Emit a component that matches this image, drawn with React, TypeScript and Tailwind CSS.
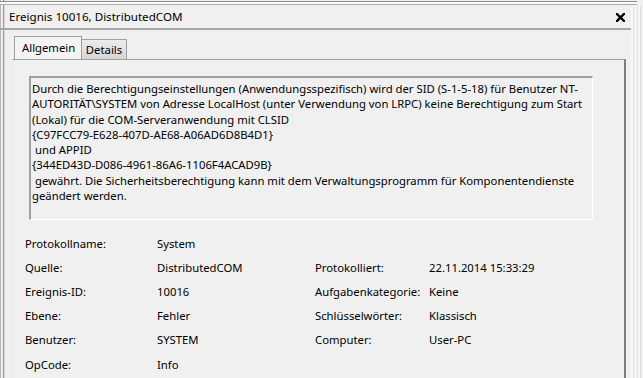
import React from 'react';

const messageLines = [
  'Durch die Berechtigungseinstellungen (Anwendungsspezifisch) wird der SID (S-1-5-18) für Benutzer NT-',
  'AUTORITÄT\\SYSTEM von Adresse LocalHost (unter Verwendung von LRPC) keine Berechtigung zum Start',
  '(Lokal) für die COM-Serveranwendung mit CLSID',
  '{C97FCC79-E628-407D-AE68-A06AD6D8B4D1}',
  ' und APPID',
  '{344ED43D-D086-4961-86A6-1106F4ACAD9B}',
  ' gewährt. Die Sicherheitsberechtigung kann mit dem Verwaltungsprogramm für Komponentendienste',
  'geändert werden.',
];

const rows: [string, string, string?, string?][] = [
  ['Protokollname:', 'System'],
  ['Quelle:', 'DistributedCOM', 'Protokolliert:', '22.11.2014 15:33:29'],
  ['Ereignis-ID:', '10016', 'Aufgabenkategorie:', 'Keine'],
  ['Ebene:', 'Fehler', 'Schlüsselwörter:', 'Klassisch'],
  ['Benutzer:', 'SYSTEM', 'Computer:', 'User-PC'],
  ['OpCode:', 'Info'],
];

function CloseIcon() {
  return (
    <svg width="9" height="9" viewBox="0 0 9 9">
      <path d="M1 1 L8 8 M8 1 L1 8" stroke="#000" strokeWidth="2.4" strokeLinecap="square" />
    </svg>
  );
}

export default function App() {
  return (
    <div
      className="w-[643px] h-[378px] overflow-hidden bg-[#f0f0f0] text-black text-[11.3px] flex"
      style={{ fontFamily: '"Segoe UI", "Noto Sans", sans-serif' }}
    >
      {/* window frame left */}
      <div className="w-[12px] h-full flex shrink-0">
        <div className="w-[1px] bg-[#b5b5b5]" />
        <div className="w-[2px]" />
        <div className="w-[1px] bg-[#9a9a9a]" />
        <div className="w-[1px] bg-[#d8d8d8]" />
      </div>

      <div className="flex-1 flex flex-col -ml-[12px]">
        {/* top frame */}
        <div className="h-[6px] flex flex-col">
          <div className="h-[1px]" />
          <div className="h-[1px] bg-[#8c8c8c]" />
          <div className="h-[2px] bg-[#fafafa]" />
          <div className="h-[1px] bg-[#a8a8a8]" />
        </div>

        {/* title */}
        <div className="h-[22px] flex items-center justify-between pl-[9px] pr-[12px] text-[11.6px]">
          <span className="leading-none">Ereignis 10016, DistributedCOM</span>
          <CloseIcon />
        </div>
        <div className="h-[2px] bg-[#a6a6a6] mr-[4px]" />

        {/* tabs */}
        <div className="flex items-end pl-[14px] mt-[6px] h-[23px]">
          <div className="h-[23px] w-[68px] border border-b-0 border-[#a0a0a0] bg-[#f4f4f4] flex items-center pl-[7px]">
            Allgemein
          </div>
          <div className="h-[20px] w-[45px] border border-l-0 border-b-0 border-[#a0a0a0] bg-gradient-to-b from-[#ececec] to-[#d6d6d6] flex items-center justify-center pt-[2px]">
            Details
          </div>
        </div>

        {/* tab panel */}
        <div className="flex-1 ml-[12px] mr-[11px] border-t border-l border-r-2 border-t-[#a0a0a0] border-l-[#e8e8e8] border-r-[#7d7d7d] pl-[16px] pr-[31px] pt-[16px]">
          <div className="h-[144px] border-t-2 border-l-2 border-b border-r border-t-[#a0a0a0] border-l-[#a0a0a0] border-b-white border-r-white pl-[1px] pt-[3px] leading-[15.3px] whitespace-pre">
            {messageLines.map((line, i) => (
              <div key={i}>{line}</div>
            ))}
          </div>

          <div className="mt-[12px] -ml-[4px]">
            {rows.map(([l1, v1, l2, v2], i) => (
              <div key={i} className="h-[24.2px] flex items-center">
                <div className="w-[132px]">{l1}</div>
                <div className="w-[158px]">{v1}</div>
                <div className="w-[114px]">{l2}</div>
                <div>{v2}</div>
              </div>
            ))}
          </div>
        </div>
      </div>

      {/* right frame */}
      <div className="w-[12px] h-full flex shrink-0 -ml-[6px] pt-[6px]">
        <div className="w-[2px] bg-[#f7f7f7]" />
        <div className="w-[1px] bg-[#e6e6e6]" />
        <div className="w-[3px] bg-[#f3f3f3]" />
        <div className="w-[1px] bg-[#e2e2e2]" />
        <div className="w-[2px] bg-[#f6f6f6]" />
        <div className="w-[1px] bg-[#dcdcdc]" />
      </div>
    </div>
  );
}
